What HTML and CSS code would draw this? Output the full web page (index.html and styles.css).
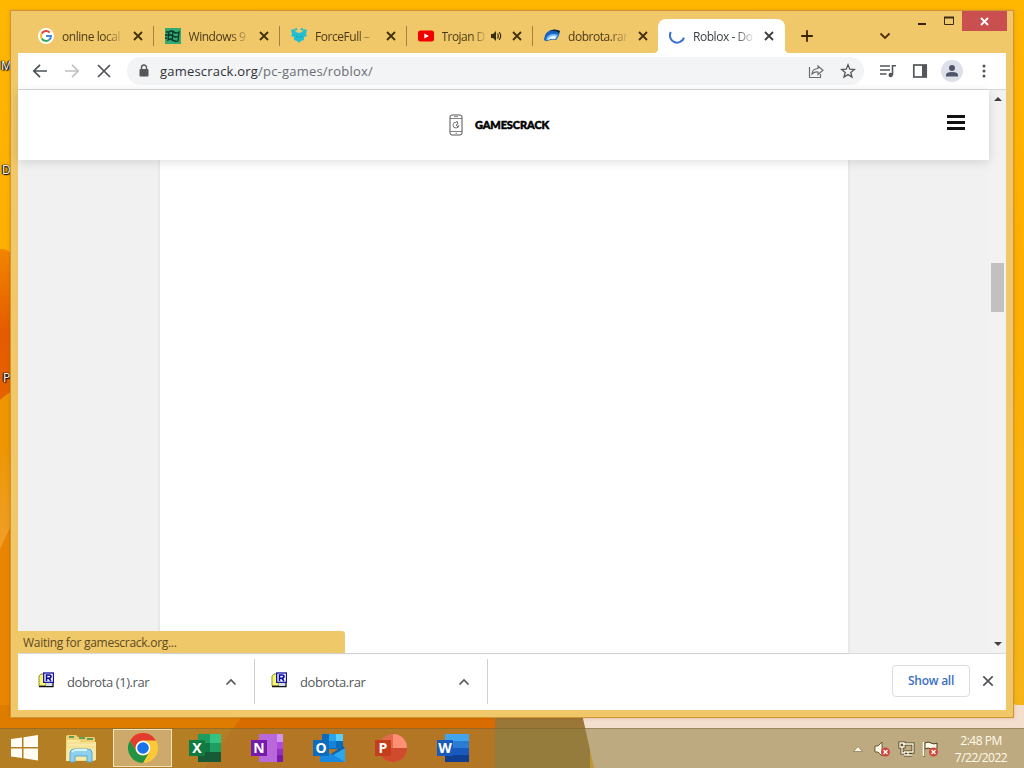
FILE: index.html
```html
<!DOCTYPE html>
<html lang="en">
<head>
  <meta charset="utf-8">
  <title>Roblox - Download</title>
  <link rel="stylesheet" href="styles.css">
</head>
<body>
  <div class="desktop">
    <svg class="wallpaper" width="1024" height="768" viewBox="0 0 1024 768">
      <defs>
        <linearGradient id="sky" x1="0" y1="0" x2="0" y2="1">
          <stop offset="0" stop-color="#ffb700"/>
          <stop offset=".35" stop-color="#fdae00"/>
          <stop offset="1" stop-color="#f5b51f"/>
        </linearGradient>
        <linearGradient id="petal" x1="0" y1="0" x2="0" y2="1">
          <stop offset="0" stop-color="#f28500"/>
          <stop offset=".5" stop-color="#e55b00"/>
          <stop offset="1" stop-color="#e56500"/>
        </linearGradient>
        <linearGradient id="glow" x1="0" y1="0" x2="0" y2="1">
          <stop offset="0" stop-color="#ee9500"/>
          <stop offset="1" stop-color="#eea02c"/>
        </linearGradient>
      </defs>
      <rect width="1024" height="768" fill="url(#sky)"/>
      <path d="M0 249Q10 248 16 260V395Q8 400 0 416Z" fill="url(#petal)"/>
      <path d="M0 400Q8 392 20 388V768H0Z" fill="#ee9500"/>
      <path d="M0 440H16V520L0 556Z" fill="url(#glow)"/>
      <path d="M0 549L16 515V768H0Z" fill="#e98500"/>
      <path d="M0 705H500V768H0Z" fill="#d96c00"/>
      <path d="M0 705H250L205 768H0Z" fill="#de7c00"/>
      <path d="M495 705H590V768H495Z" fill="#9a7637"/>
      <path d="M580 705H1024V768H594Z" fill="#f4decd"/>
      <path d="M1010 700Q1018 708 1024 710V730H1010Z" fill="#f4decd"/>
    </svg>
    <span class="desk-label label-m">M</span>
    <span class="desk-label label-d">D</span>
    <span class="desk-label label-p">P</span>

    <div class="window">
      <div class="tabstrip">
        <div class="tab">
          <svg class="favicon" viewBox="0 0 16 16"><circle cx="8" cy="8" r="8" fill="#fff"/><g fill="none" stroke-width="2"><path d="M11.7 4.5A5 5 0 0 0 3.7 5.6" stroke="#ea4335"/><path d="M3.7 5.5a5 5 0 0 0 0 5" stroke="#fbbc05"/><path d="M3.7 10.4a5 5 0 0 0 7.5 1.4" stroke="#34a853"/><path d="M11.2 11.8A5 5 0 0 0 13 8H8" stroke="#4285f4"/></g></svg>
          <span class="tab-title">online local</span>
          <svg class="close" viewBox="0 0 16 16"><path d="M4 4l8 8M12 4l-8 8"/></svg>
        </div>
        <div class="tab">
          <svg class="favicon" viewBox="0 0 16 16"><rect width="16" height="16" fill="#35a870"/><path d="M4 4q3-2 5 0t5 0l-1 9q-3 1-5-1t-5 0zM8 3L7 13M3 8q3-2 5 0t6 0M1 4h3M0 7h3M0 10h2" fill="none" stroke="#06362b" stroke-width="1.3"/></svg>
          <span class="tab-title">Windows 9</span>
          <svg class="close" viewBox="0 0 16 16"><path d="M4 4l8 8M12 4l-8 8"/></svg>
        </div>
        <div class="tab">
          <svg class="favicon" viewBox="0 0 16 16"><path d="M0 2l3-1 2 3 3 1 3-1 2-3 3 1-1 4 1 2-3 1v3l-3 1-2 2-2-2-3-1V9L0 8l1-2z" fill="#22bfd0"/><circle cx="5" cy="1.300" r="1.200" fill="#22bfd0"/><circle cx="11" cy="1.300" r="1.200" fill="#22bfd0"/><path d="M5 8l2 1.500M11 8L9 9.500" stroke="#1596a8"/></svg>
          <span class="tab-title">ForceFull –</span>
          <svg class="close" viewBox="0 0 16 16"><path d="M4 4l8 8M12 4l-8 8"/></svg>
        </div>
        <div class="tab tab-audio">
          <svg class="favicon" viewBox="0 0 16 16"><rect y="2.5" width="16" height="11" rx="2.5" fill="#f00000"/><path d="M6.3 5.5v5L10.8 8z" fill="#fff"/></svg>
          <span class="tab-title">Trojan D</span>
          <svg class="speaker" viewBox="0 0 12 12"><path d="M1 4h2l3-3v10L3 8H1z" fill="#3a2c0e"/><path d="M7.5 3.5q1.6 2.5 0 5M9.2 2q3 4 0 8" fill="none" stroke="#3a2c0e" stroke-width="1.2"/></svg>
          <svg class="close" viewBox="0 0 16 16"><path d="M4 4l8 8M12 4l-8 8"/></svg>
        </div>
        <div class="tab last">
          <svg class="favicon" viewBox="0 0 16 16"><path d="M0 11Q1 3 8 2q5-1 8 1-1 6-4 9-3-1-6 0-2 1-4 1-2 0-2-2z" fill="#1a62bd"/><path d="M2 11q2-5 8-5 3 0 4 1l-2 4q-4-1-8 1-1 1-2-1z" fill="#6dbcff"/><path d="M4 11q3-4 8-3l-1 3q-4-1-7 1z" fill="#eaf5ff"/><path d="M5 3q5-3 11 0l-1 2Q11 2 5 3z" fill="#10243c"/></svg>
          <span class="tab-title">dobrota.rar</span>
          <svg class="close" viewBox="0 0 16 16"><path d="M4 4l8 8M12 4l-8 8"/></svg>
        </div>
        <div class="tab active">
          <svg class="favicon" viewBox="0 0 16 16"><path d="M1.800 4A7.200 7.200 0 1 0 15 9.600" fill="none" stroke="#3b6fd6" stroke-width="2"/></svg>
          <span class="tab-title">Roblox - Do</span>
          <svg class="close" viewBox="0 0 16 16"><path d="M4 4l8 8M12 4l-8 8"/></svg>
        </div>
        <svg class="new-tab" viewBox="0 0 16 16"><path d="M8 2.2v11.6M2.2 8h11.6" stroke="#3a2300" stroke-width="1.8"/></svg>
        <svg class="tab-search" viewBox="0 0 16 16"><path d="M3.5 5.5L8 10l4.5-4.5" fill="none" stroke="#4a2c0a" stroke-width="1.8"/></svg>
        <div class="window-buttons">
          <svg class="minimize" viewBox="0 0 27 20"><path d="M10 13h8" stroke="#3a2000" stroke-width="2"/></svg>
          <svg class="maximize" viewBox="0 0 27 20"><path d="M9.500 6.500h9v7h-9z" fill="none" stroke="#3a2c10"/><path d="M9 6.500h10" stroke="#3a2c10" stroke-width="2"/></svg>
          <svg class="win-close" viewBox="0 0 45 20"><path d="M19 7l7 7M26 7l-7 7" stroke="#fff" stroke-width="1.8"/></svg>
        </div>
      </div>

      <div class="browser">
        <div class="toolbar">
          <svg class="tool" viewBox="0 0 16 16"><path d="M15 8H2M8 1.8L1.8 8 8 14.2" stroke="#4d5156"/></svg>
          <svg class="tool" viewBox="0 0 16 16"><path d="M1 8h13M8 1.8L14.2 8 8 14.2" stroke="#bfc1c4"/></svg>
          <svg class="tool" viewBox="0 0 16 16"><path d="M2 2l12 12M14 2L2 14" stroke="#505357"/></svg>
          <div class="omnibox">
            <svg class="lock" viewBox="0 0 16 16"><rect x="3.5" y="6" width="9" height="7.5" rx="1" fill="#54585c"/><path d="M5.5 6.5v-2a2.5 2.5 0 0 1 5 0v2" fill="none" stroke="#54585c" stroke-width="1.4"/></svg>
            <span class="url">gamescrack.org<span class="path">/pc-games/roblox/</span></span>
            <svg class="tool" viewBox="0 0 16 16"><path d="M1.500 4v10.500h11V11M4 11q.5-5.300 6-5.500V3l5 4.200-5 4.300V9Q6.500 8.500 4 11z" stroke="#6a6d72" stroke-width="1.200"/></svg>
            <svg class="tool" viewBox="0 0 16 16"><path d="M8 1.800l1.800 4.400 4.600.3-3.600 3 1.200 4.600L8 11.600l-4 2.500 1.200-4.600-3.600-3 4.600-.3z" stroke="#54575c" stroke-width="1.300"/></svg>
          </div>
          <svg class="tool" viewBox="0 0 16 16"><path d="M0 3h10M0 7h10M0 11h6.500M12.500 12V2.700H16" stroke="#53565b" stroke-width="1.600"/><circle cx="10.700" cy="12" r="2.200" fill="#53565b"/></svg>
          <svg class="tool" viewBox="0 0 16 16"><rect x="1.800" y="2" width="12.400" height="12" stroke="#53565b" stroke-width="1.700"/><path d="M10 2h4.500v12H10z" fill="#53565b"/></svg>
          <div class="avatar"><svg viewBox="0 0 16 16"><circle cx="8" cy="5" r="3" fill="#50546b"/><path d="M2 13.500v-1.500q0-3 6-3t6 3v1.500z" fill="#50546b"/></svg></div>
          <svg class="tool" viewBox="0 0 16 16"><g fill="#505357"><circle cx="8" cy="3" r="1.500"/><circle cx="8" cy="8" r="1.500"/><circle cx="8" cy="13" r="1.500"/></g></svg>
        </div>

        <div class="viewport">
          <div class="page">
            <header class="site-header">
              <div class="brand">
                <svg viewBox="0 0 14 22"><rect x="1" y="1" width="12" height="20" rx="2" fill="#fff" stroke="#555"/><path d="M1 4.500h12M1 17.500h12M5 2.700h4M6.500 19.200h1.500" stroke="#666" stroke-width=".8"/><path d="M8 8Q4 8 4 11t3 3 3-3M8 7l1 3-2 1 2 2" fill="none" stroke="#555" stroke-width=".8"/></svg>
                <span>GAMESCRACK</span>
              </div>
              <div class="burger"><i></i><i></i><i></i></div>
            </header>
            <main class="content"></main>
          </div>
          <div class="scrollbar">
            <div class="arrow up"></div>
            <div class="thumb"></div>
            <div class="arrow down"></div>
          </div>
          <div class="status">Waiting for gamescrack.org...</div>
        </div>

        <div class="downloads">
          <div class="download">
            <svg class="rar" viewBox="0 0 16 16"><path d="M1 4l2-2h5v12H1z" fill="#f7f56e" stroke="#8b8c3a"/><path d="M1 14.500h14V10" fill="none" stroke="#111" stroke-width="1.300"/><path d="M8 10h6v4H8z" fill="#d6dce8"/><rect x="5.700" y="1" width="9.800" height="9.300" fill="#fff" stroke="#1010a0" stroke-width="1.300"/><path d="M8.500 9V3H11q2 0 2 1.600T11 6.200H8.500M10.800 6.200L13 9" fill="none" stroke="#0808a8" stroke-width="1.600"/></svg>
            <span>dobrota (1).rar</span>
            <svg class="chevron" viewBox="0 0 16 16"><path d="M3.500 10.500L8 6l4.500 4.500"/></svg>
          </div>
          <div class="download">
            <svg class="rar" viewBox="0 0 16 16"><path d="M1 4l2-2h5v12H1z" fill="#f7f56e" stroke="#8b8c3a"/><path d="M1 14.500h14V10" fill="none" stroke="#111" stroke-width="1.300"/><path d="M8 10h6v4H8z" fill="#d6dce8"/><rect x="5.700" y="1" width="9.800" height="9.300" fill="#fff" stroke="#1010a0" stroke-width="1.300"/><path d="M8.500 9V3H11q2 0 2 1.600T11 6.200H8.500M10.800 6.200L13 9" fill="none" stroke="#0808a8" stroke-width="1.600"/></svg>
            <span>dobrota.rar</span>
            <svg class="chevron" viewBox="0 0 16 16"><path d="M3.500 10.500L8 6l4.500 4.500"/></svg>
          </div>
          <button class="show-all">Show all</button>
          <svg class="shelf-close" viewBox="0 0 16 16"><path d="M3.300 3.300l9.400 9.400M12.700 3.300l-9.400 9.400" stroke="#505357" stroke-width="1.700"/></svg>
        </div>
      </div>
    </div>

    <div class="taskbar">
      <div class="task start"><svg width="28" height="26" viewBox="0 0 28 26"><path d="M0 4l11-1.600V12H0zM12.500 2.200L27 0v12H12.500zM0 13.500h11V23L0 21.500zM12.500 13.500H27V25.500l-14.500-2.200z" fill="#fffdf4"/></svg></div>
      <div class="task"><svg width="32" height="30" viewBox="0 0 32 30"><path d="M1 4q0-2 2-2h8l2 2h15q2 0 2 2v22H1z" fill="#efcf72"/><path d="M4 4h5M14 5h6M22 6h6" stroke="#5a9e58" stroke-width="2"/><path d="M2 7h12l2 2h15v18l-30 1z" fill="#fae9a5"/><path d="M2 10h28M2 14h28" stroke="#f3d880"/><path d="M5 29V20q0-4 4-4h14q4 0 4 4v9h-5v-6H10v6z" fill="#8fd0ee" stroke="#56a7cf"/><path d="M7 19q1-2 4-2h11" fill="none" stroke="#d7f3ff" stroke-width="2"/></svg></div>
      <div class="task running"><svg width="30" height="30" viewBox="0 0 30 30"><circle cx="15" cy="15" r="15" fill="#fcc934"/><path d="M2 7.500A15 15 0 0 1 28 7.500H15A7.500 7.500 0 0 0 8.500 18.700z" fill="#e33b2e"/><path d="M2 7.500A15 15 0 0 0 15 30L21.500 18.700A7.500 7.500 0 0 1 8.500 18.700z" fill="#229342"/><circle cx="15" cy="15" r="7.300" fill="#fff"/><circle cx="15" cy="15" r="5.800" fill="#1a73e8"/></svg></div>
      <div class="task"><svg width="32" height="28" viewBox="0 0 32 28"><path d="M9 0h12v28H9z" fill="#1c9c5f"/><path d="M21 0h11v9H21z" fill="#33c481"/><path d="M9 9h12v9H9z" fill="#127845"/><path d="M21 9h11v9H21z" fill="#1f9e62"/><path d="M9 18h23v10H9z" fill="#175a37"/></svg><span class="badge excel">X</span></div>
      <div class="task"><svg width="32" height="28" viewBox="0 0 32 28"><path d="M8 0h24v28H8z" fill="#b968dc"/><path d="M26 0h6v8h-6z" fill="#d593f0"/><path d="M26 8h6v7h-6z" fill="#b14be0"/><path d="M26 15h6v6h-6z" fill="#9332bf"/><path d="M26 21h6v7h-6z" fill="#7719aa"/></svg><span class="badge onenote">N</span></div>
      <div class="task"><svg width="32" height="28" viewBox="0 0 32 28"><path d="M9 0h21v15H9z" fill="#0c6cbc"/><path d="M16 0h14v7H16z" fill="#2ba5e8"/><path d="M23 0h7v7h-7z" fill="#58d0fa"/><path d="M16 7h7v7h-7z" fill="#1485d6"/><path d="M7 13l12 8 13-7v14H7z" fill="#188be0"/><path d="M19 20l13 8V14z" fill="#2ba8ed"/><path d="M30 12l2 2-12 7-2-1z" fill="#0d61ae"/></svg><span class="badge outlook">O</span></div>
      <div class="task"><svg width="32" height="28" viewBox="0 0 32 28"><path d="M18 0A14 14 0 1 0 32 14H18z" fill="#e06a4c"/><path d="M18 0a14 14 0 0 1 14 14H18z" fill="#ff9073"/><path d="M4 14h28A14 14 0 0 1 4 14z" fill="#d04a2e"/></svg><span class="badge powerpoint">P</span></div>
      <div class="task"><svg width="32" height="28" viewBox="0 0 32 28"><path d="M8 0h24v7H8z" fill="#41a5ee"/><path d="M8 7h24v7H8z" fill="#2b7cd3"/><path d="M8 14h24v7H8z" fill="#185abd"/><path d="M8 21h24v7H8z" fill="#103f91"/></svg><span class="badge word">W</span></div>
      <div class="tray">
        <svg class="tray-more" width="10" height="16" viewBox="0 0 10 16"><path d="M.5 10.500l4.500-5 4.500 5z" fill="#fffbe9" stroke="#7a6440" stroke-width=".6"/></svg>
        <svg width="17" height="16" viewBox="0 0 17 16"><path d="M1 5h3l4-4v14l-4-4H1z" fill="#fffbe9" stroke="#4c3e20" stroke-width=".8"/><circle cx="11.500" cy="11" r="4.500" fill="#d2453a"/><path d="M9.500 9l4 4M13.500 9l-4 4" stroke="#fff" stroke-width="1.400"/></svg>
        <svg width="17" height="16" viewBox="0 0 17 16"><path d="M5 3h10v8H6M10 11v3M6 14h8M2 2h4v4H2zM4 6v6h3" fill="none" stroke="#4c3e20" stroke-width="3"/><path d="M5 3h10v8H6M10 11v3M6 14h8M2 2h4v4H2zM4 6v6h3" fill="none" stroke="#fffbe9" stroke-width="1.300"/></svg>
        <svg width="17" height="16" viewBox="0 0 17 16"><path d="M2 1v15M3 2q3-2 6 0t6 0v6q-3 2-6 0t-6 0z" fill="#fffbe9" stroke="#4c3e20" stroke-width="1"/><path d="M1.500 1v14" stroke="#fffbe9" stroke-width="1.500"/><circle cx="11.500" cy="11" r="4.500" fill="#d2453a"/><path d="M9.500 9l4 4M13.500 9l-4 4" stroke="#fff" stroke-width="1.400"/></svg>
        <div class="clock"><span>2:48 PM</span><span>7/22/2022</span></div>
      </div>
    </div>
  </div>
</body>
</html>
```
FILE: styles.css
```css
* {
  box-sizing: border-box;
}

body {
  margin: 0;
  overflow: hidden;
  font-family: "Open Sans", "Noto Sans", sans-serif;
  font-size: 12px;
}

svg {
  display: block;
  flex: none;
}

.desktop {
  position: relative;
  width: 1024px;
  height: 768px;
  overflow: hidden;
}

.wallpaper {
  position: absolute;
  left: 0;
  top: 0;
}

.desk-label {
  position: absolute;
  color: #fff;
  font-size: 12px;
  line-height: 16px;
  text-shadow: 1px 1px 1px #000, -1px 0 1px #000, 0 0 2px #000;
}

.label-m {
  left: 1px;
  top: 58px;
}

.label-d {
  left: 2px;
  top: 162px;
}

.label-p {
  left: 3px;
  top: 370px;
}

/* browser window */
.window {
  position: absolute;
  left: 11px;
  top: 11px;
  width: 1002px;
  height: 706px;
  padding: 0 7px 7px;
  background: #f0c869;
  box-shadow: 0 0 0 1px #cf9434, 0 0 4px rgba(120, 70, 0, 0.4);
}

.tabstrip {
  display: flex;
  align-items: flex-end;
  height: 42px;
  padding-left: 9px;
}

.tab {
  display: flex;
  align-items: center;
  position: relative;
  width: 126.5px;
  height: 34px;
  padding: 0 8px 0 11px;
  color: #4a3a18;
}

.tab::after {
  content: "";
  position: absolute;
  right: 0;
  top: 7px;
  width: 1px;
  height: 20px;
  background: #a5823b;
}

.tab.last::after,
.tab.active::after {
  display: none;
}

.tab.last {
  padding-right: 9px;
}

.tab.active {
  width: 127px;
  margin-left: -1.5px;
  background: #fff;
  border-radius: 8px 8px 0 0;
  color: #3c4043;
}

/* flared feet of the active tab */
.tab.active::before {
  content: "";
  position: absolute;
  left: -5px;
  right: -5px;
  bottom: 0;
  height: 5px;
  background:
    radial-gradient(circle at 0 0, transparent 5px, #fff 5.5px) left / 5px 5px no-repeat,
    radial-gradient(circle at 100% 0, transparent 5px, #fff 5.5px) right / 5px 5px no-repeat;
}

.favicon {
  width: 16px;
  height: 16px;
  margin-right: 8px;
}

.tab-title {
  flex: 1;
  min-width: 0;
  overflow: hidden;
  white-space: nowrap;
  letter-spacing: -0.45px;
  -webkit-mask-image: linear-gradient(to right, #000 70%, transparent 105%);
  mask-image: linear-gradient(to right, #000 70%, transparent 105%);
}

.close {
  width: 16px;
  height: 16px;
  margin-left: 8px;
  fill: none;
  stroke: #43300f;
  stroke-width: 1.8;
}

.active .close {
  stroke: #3c4043;
}

.speaker {
  width: 12px;
  height: 12px;
  margin-left: 5px;
}

.tab-audio .close {
  margin-left: 7px;
}

.tab-audio .tab-title {
  letter-spacing: -0.55px;
}

.new-tab {
  width: 16px;
  height: 16px;
  margin: 0 0 9px 14px;
}

.tab-search {
  width: 16px;
  height: 16px;
  margin: 0 0 9px 62px;
}

.window-buttons {
  display: flex;
  align-self: flex-start;
  height: 20px;
  margin: 0 -1px 0 auto;
}

.minimize,
.maximize {
  width: 27px;
  height: 20px;
}

.win-close {
  width: 45px;
  height: 20px;
  background: #c9504f;
}

.browser {
  display: flex;
  flex-direction: column;
  width: 988px;
  height: 657px;
  background: #fff;
}

.toolbar {
  display: flex;
  align-items: center;
  gap: 16px;
  height: 37px;
  padding: 0 14px;
  border-bottom: 1px solid #d5d7da;
}

.tool {
  width: 16px;
  height: 16px;
  fill: none;
  stroke-width: 1.7;
}

.omnibox {
  display: flex;
  flex: 1;
  align-items: center;
  gap: 16px;
  height: 28px;
  margin: 0 0 0 -1px;
  padding: 0 8px 0 9px;
  border-radius: 14px;
  background: #f2f4f6;
}

.lock {
  width: 16px;
  height: 16px;
  margin-right: -8px;
}

.url {
  flex: 1;
  color: #303134;
  font-size: 13px;
  letter-spacing: 0.2px;
}

.path {
  color: #6a6d72;
}

.avatar {
  display: flex;
  align-items: center;
  justify-content: center;
  width: 22px;
  height: 22px;
  margin: 0 -3px;
  border-radius: 50%;
  background: #dde0e8;
}

.avatar svg {
  width: 16px;
  height: 16px;
}

.viewport {
  display: flex;
  position: relative;
  height: 563px;
}

.page {
  display: flex;
  flex-direction: column;
  width: 971px;
  background: #f1f1f1;
}

.site-header {
  display: flex;
  align-items: center;
  justify-content: center;
  position: relative;
  z-index: 1;
  height: 70px;
  background: #fff;
  box-shadow: 0 2px 10px rgba(0, 0, 0, 0.13);
}

.brand {
  display: flex;
  align-items: center;
  gap: 12px;
  margin-right: 9px;
  color: #000;
  font-family: Lato, sans-serif;
  font-size: 11px;
  font-weight: 900;
  line-height: 14px;
}

.brand span {
  letter-spacing: -0.1px;
  -webkit-text-stroke: 0.5px #000;
}

.brand svg {
  width: 14px;
  height: 22px;
}

.burger {
  display: flex;
  flex-direction: column;
  gap: 3px;
  position: absolute;
  right: 24px;
  top: 25px;
  width: 18px;
}

.burger i {
  height: 3px;
  background: #111;
}

.content {
  flex: 1;
  width: 688px;
  margin-left: 142px;
  background: #fff;
  box-shadow: 0 0 3px rgba(0, 0, 0, 0.12);
}

.scrollbar {
  display: flex;
  flex-direction: column;
  align-items: center;
  width: 17px;
  padding: 7px 0;
  background: #f2f2f2;
}

.arrow {
  border: 4px solid transparent;
}

.up {
  border-top: 0;
  border-bottom: 4px solid #404040;
}

.down {
  margin-top: auto;
  border-bottom: 0;
  border-top: 4px solid #404040;
}

.thumb {
  width: 13px;
  height: 49px;
  margin-top: 162px;
  background: #c1c1c1;
}

.status {
  position: absolute;
  left: 0;
  bottom: 0;
  z-index: 2;
  width: 327px;
  height: 22px;
  padding-left: 5px;
  border-radius: 0 3px 0 0;
  background: #efc86a;
  color: #5c4a22;
  letter-spacing: -0.28px;
  line-height: 24px;
}

.downloads {
  display: flex;
  align-items: center;
  flex: 1;
  padding: 0 10px 2px 0;
  border-top: 1px solid #d8dade;
}

.download {
  display: flex;
  align-items: center;
  width: 237px;
  height: 45px;
  padding: 2px 15px 0 20px;
  border-right: 1px solid #cfd0d2;
  color: #55585c;
  font-size: 13px;
  letter-spacing: -0.42px;
}

.download + .download {
  width: 233px;
  padding-left: 16px;
}

.download span {
  flex: 1;
  margin-left: 13px;
}

.rar {
  width: 16px;
  height: 16px;
  margin-bottom: 4px;
}

.chevron {
  width: 16px;
  height: 16px;
  fill: none;
  stroke: #55585c;
  stroke-width: 1.7;
}

.show-all {
  width: 78px;
  height: 32px;
  margin-left: auto;
  padding: 0 0 2px;
  border: 1px solid #dadce0;
  border-radius: 4px;
  background: #fff;
  color: #3b6fc4;
  font-family: inherit;
  font-size: 12px;
  font-weight: 600;
  letter-spacing: -0.25px;
}

.shelf-close {
  width: 16px;
  height: 16px;
  margin-left: 10px;
}

/* taskbar */
.taskbar {
  display: flex;
  position: absolute;
  left: 0;
  bottom: 0;
  width: 1024px;
  height: 40px;
  border-top: 1px solid rgba(110, 85, 35, 0.4);
  background: rgba(145, 128, 65, 0.55);
}

.task {
  display: flex;
  align-items: center;
  justify-content: center;
  position: relative;
  width: 60px;
  height: 38px;
  margin-right: 2px;
}

.start {
  width: 49px;
}

.running {
  width: 59px;
  margin-right: 3px;
  border: 1px solid #f5e3bc;
  background: rgba(225, 205, 165, 0.55);
}

.badge {
  position: absolute;
  left: 14px;
  top: 11px;
  width: 16px;
  height: 16px;
  color: #fff;
  font-size: 14px;
  font-weight: 700;
  line-height: 16px;
  text-align: center;
}

.excel {
  background: #107c41;
}

.onenote {
  background: #7719aa;
}

.outlook {
  background: #0f6cbd;
}

.powerpoint {
  background: #c43e1c;
}

.word {
  background: #185abd;
}

.tray {
  display: flex;
  align-items: center;
  gap: 7px;
  margin-left: auto;
  padding-right: 13px;
}

.tray-more {
  margin-right: 4px;
}

.clock {
  display: flex;
  flex-direction: column;
  align-items: center;
  width: 60px;
  margin-left: 5px;
  color: #fffbea;
  font-size: 12px;
  letter-spacing: -0.5px;
  line-height: 17px;
}
```
